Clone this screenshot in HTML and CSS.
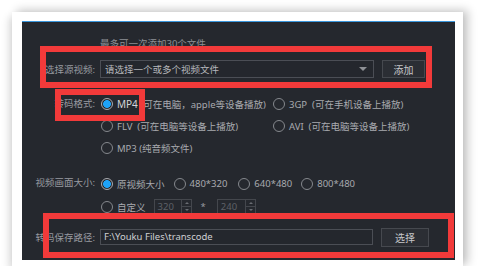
FILE: index.html
```html
<!DOCTYPE html>
<html lang="zh-CN">
<head>
    <meta charset="utf-8">
    <title>转码设置</title>
    <link rel="stylesheet" href="styles.css">
</head>
<body>
    <div class="paper">
        <div class="panel">
            <div class="hint">最多可一次添加30个文件</div>

            <div class="row row-src">
                <span class="label">选择源视频:</span>
                <div class="select">
                    <span>请选择一个或多个视频文件</span>
                    <i class="caret"></i>
                </div>
                <button class="btn btn-add">添加</button>
            </div>

            <div class="row row-fmt">
                <span class="label">转码格式:</span>
                <div class="fmt-grid">
                    <label class="opt on"><i class="radio"></i><b>MP4</b>&nbsp;(可在电脑，apple等设备播放)</label>
                    <label class="opt"><i class="radio"></i>3GP&nbsp;&nbsp;(可在手机设备上播放)</label>
                    <label class="opt"><i class="radio"></i>FLV&nbsp;&nbsp;(可在电脑等设备上播放)</label>
                    <label class="opt"><i class="radio"></i>AVI&nbsp;&nbsp;(可在电脑等设备上播放)</label>
                    <label class="opt"><i class="radio"></i>MP3 (纯音频文件)</label>
                </div>
            </div>

            <div class="row row-size">
                <span class="label">视频画面大小:</span>
                <div class="size-list">
                    <div class="size-line">
                        <label class="opt on"><i class="radio"></i>原视频大小</label>
                        <label class="opt"><i class="radio"></i>480*320</label>
                        <label class="opt"><i class="radio"></i>640*480</label>
                        <label class="opt"><i class="radio"></i>800*480</label>
                    </div>
                    <div class="size-line">
                        <label class="opt"><i class="radio"></i>自定义</label>
                        <div class="spin"><span>320</span><i class="spin-btns"></i></div>
                        <span class="times">*</span>
                        <div class="spin"><span>240</span><i class="spin-btns"></i></div>
                    </div>
                </div>
            </div>

            <div class="row row-path">
                <span class="label">转码保存路径:</span>
                <div class="path">F:\Youku Files\transcode</div>
                <button class="btn btn-pick">选择</button>
            </div>

            <div class="mark mark-src"></div>
            <div class="mark mark-fmt"></div>
            <div class="mark mark-path"></div>
        </div>
    </div>
</body>
</html>
```

FILE: styles.css
```css
* {
    margin: 0;
    padding: 0;
    box-sizing: border-box;
}

body {
    background: #fff;
    font-family: 'Noto Sans', 'Noto Sans CJK SC', sans-serif;
    font-size: 9.5px;
    overflow: hidden;
}

.paper {
    margin: 12px 0 0 12px;
    width: 451px;
    height: 254px;
    padding: 9px 8px 0 10px;
    background: #fff;
    box-shadow: 5px -2px 9px rgba(0, 0, 0, 0.22), -3px 5px 8px rgba(0, 0, 0, 0.14);
}

.panel {
    position: relative;
    width: 433px;
    height: 239px;
    background: #25282e;
    border-top: 1px solid #3b97dd;
    padding-top: 13px;
    color: #a8aaae;
}

.hint {
    height: 18px;
    line-height: 18px;
    padding-left: 78px;
    color: #8d9095;
}

.row {
    display: flex;
    align-items: center;
    gap: 5px;
}

.label {
    flex: 0 0 73px;
    text-align: right;
    color: #989aa0;
}

.row-src {
    margin-top: 6px;
    height: 20px;
}

.select {
    width: 274px;
    height: 18px;
    border: 1px solid #4b4e55;
    background: #24272d;
    display: flex;
    align-items: center;
    justify-content: space-between;
    padding: 0 6px 0 4px;
    color: #b6b8bc;
}

.caret {
    width: 0;
    height: 0;
    border-left: 4px solid transparent;
    border-right: 4px solid transparent;
    border-top: 4px solid #8e9196;
}

.btn {
    height: 18px;
    border: 1px solid #46494f;
    background: #2b2e34;
    color: #c6c7ca;
    font-family: inherit;
    font-size: 10px;
}

.btn-add {
    width: 43px;
    margin-left: 3px;
}

.row-fmt {
    margin-top: 14px;
    align-items: flex-start;
}

.row-fmt .label,
.row-size .label {
    line-height: 22px;
}

.fmt-grid {
    display: grid;
    grid-template-columns: 172px auto;
    grid-auto-rows: 22px;
}

.opt {
    display: flex;
    align-items: center;
    white-space: nowrap;
    color: #a8aaae;
}

.opt b {
    font-weight: 400;
    font-size: 10px;
    color: #d4d5d8;
}

.radio {
    width: 12px;
    height: 12px;
    margin: 0 4px 0 1px;
    border: 1px solid #85888d;
    border-radius: 50%;
    flex: none;
}

.opt.on .radio {
    border-color: #a9abb0;
    background: radial-gradient(circle, #1ea2f7 0 3.6px, transparent 4.2px);
}

.row-size {
    margin-top: 13px;
    align-items: flex-start;
}

.size-line {
    height: 23px;
    display: flex;
    align-items: center;
    gap: 8px;
}

.size-line .opt:nth-child(3) {
    margin-left: 2px;
}

.spin {
    width: 38px;
    height: 15px;
    border: 1px solid #44474d;
    display: flex;
    align-items: center;
    justify-content: space-between;
    padding-left: 3px;
    color: #5d6067;
}

.spin + .times + .spin {
    width: 39px;
}

.spin-btns {
    width: 10px;
    height: 13px;
    border-left: 1px solid #44474d;
    background:
        linear-gradient(#44474d, #44474d) center / 10px 1px no-repeat;
    position: relative;
}

.spin-btns::before,
.spin-btns::after {
    content: '';
    position: absolute;
    left: 3px;
    border-left: 2px solid transparent;
    border-right: 2px solid transparent;
}

.spin-btns::before {
    top: 2px;
    border-bottom: 2px solid #6a6d73;
}

.spin-btns::after {
    bottom: 2px;
    border-top: 2px solid #6a6d73;
}

.times {
    color: #9a9ca1;
    margin: 0 3px 0 1px;
}

.row-path {
    margin-top: 8px;
    height: 22px;
}

.path {
    width: 273px;
    height: 16px;
    border: 1px solid #4b4e55;
    background: #24272d;
    line-height: 14px;
    padding-left: 3px;
    color: #cfd0d3;
}

.btn-pick {
    width: 48px;
    height: 19px;
    margin-left: 3px;
}

.mark {
    position: absolute;
    border: 6px solid #f23a3a;
    z-index: 2;
}

.mark-src {
    left: 18px;
    top: 24px;
    width: 392px;
    height: 42px;
}

.mark-fmt {
    left: 33px;
    top: 67px;
    width: 90px;
    height: 32px;
}

.mark-path {
    left: 21px;
    top: 191px;
    width: 411px;
    height: 45px;
}
```
